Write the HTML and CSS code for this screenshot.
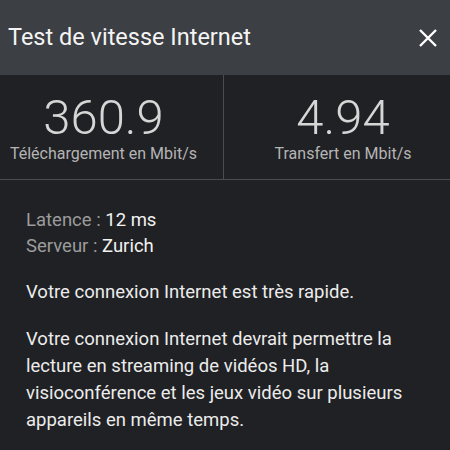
FILE: index.html
```html
<!DOCTYPE html>
<html lang="fr">
<head>
    <meta charset="UTF-8">
    <meta name="viewport" content="width=device-width, initial-scale=1.0">
    <title>Test de vitesse Internet</title>
    <link rel="stylesheet" href="styles.css">
</head>
<body>
    <header class="topbar">
        <h1 class="title">Test de vitesse Internet</h1>
        <button class="close" aria-label="Fermer">
            <svg width="18" height="18" viewBox="0 0 18 18">
                <path d="M1 1 L17 17 M17 1 L1 17" stroke="#ffffff" stroke-width="2.4" fill="none"/>
            </svg>
        </button>
    </header>

    <section class="speeds">
        <div class="speed speed-down">
            <div class="value">360.9</div>
            <div class="unit">Téléchargement en Mbit/s</div>
        </div>
        <div class="speed speed-up">
            <div class="value">4.94</div>
            <div class="unit">Transfert en Mbit/s</div>
        </div>
    </section>

    <section class="details">
        <div class="stats">
            <div><span class="label">Latence :</span> 12 ms</div>
            <div><span class="label">Serveur :</span> Zurich</div>
        </div>
        <p>Votre connexion Internet est très rapide.</p>
        <p>Votre connexion Internet devrait permettre la lecture en streaming de vidéos HD, la visioconférence et les jeux vidéo sur plusieurs appareils en même temps.</p>
    </section>
</body>
</html>
```

FILE: styles.css
```css
body {
    margin: 0;
    width: 450px;
    height: 450px;
    overflow: hidden;
    background-color: #202124;
    font-family: Roboto, "Noto Sans", sans-serif;
    color: #ececec;
}

.topbar {
    display: flex;
    align-items: center;
    justify-content: space-between;
    height: 75px;
    padding: 0 13px 0 8px;
    background-color: #3c3f43;
    box-sizing: border-box;
}

.title {
    margin: 0 0 2px 0;
    font-size: 23.5px;
    font-weight: normal;
    color: #f4f4f4;
}

.close {
    display: flex;
    padding: 0;
    border: none;
    background: none;
}

.speeds {
    display: grid;
    grid-template-columns: 224px 1fr;
    height: 104px;
    border-bottom: 1px solid #4a4c50;
}

.speed {
    text-align: center;
    padding-top: 17px;
}

.speed-down {
    padding-right: 16px;
    border-right: 1px solid #4a4c50;
}

.speed-up {
    padding-left: 12px;
}

.value {
    font-size: 49px;
    font-weight: 300;
    line-height: 52px;
    color: #d6d6d6;
}

.unit {
    font-size: 16px;
    color: #b4b4b4;
}

.details {
    padding: 27px 26px 0 26px;
    font-size: 18.5px;
}

.stats {
    line-height: 26px;
    color: #f2f2f2;
}

.label {
    color: #9c9c9c;
}

.details p {
    margin: 20px 0 0 0;
    line-height: 27px;
    color: #ececec;
}
```
